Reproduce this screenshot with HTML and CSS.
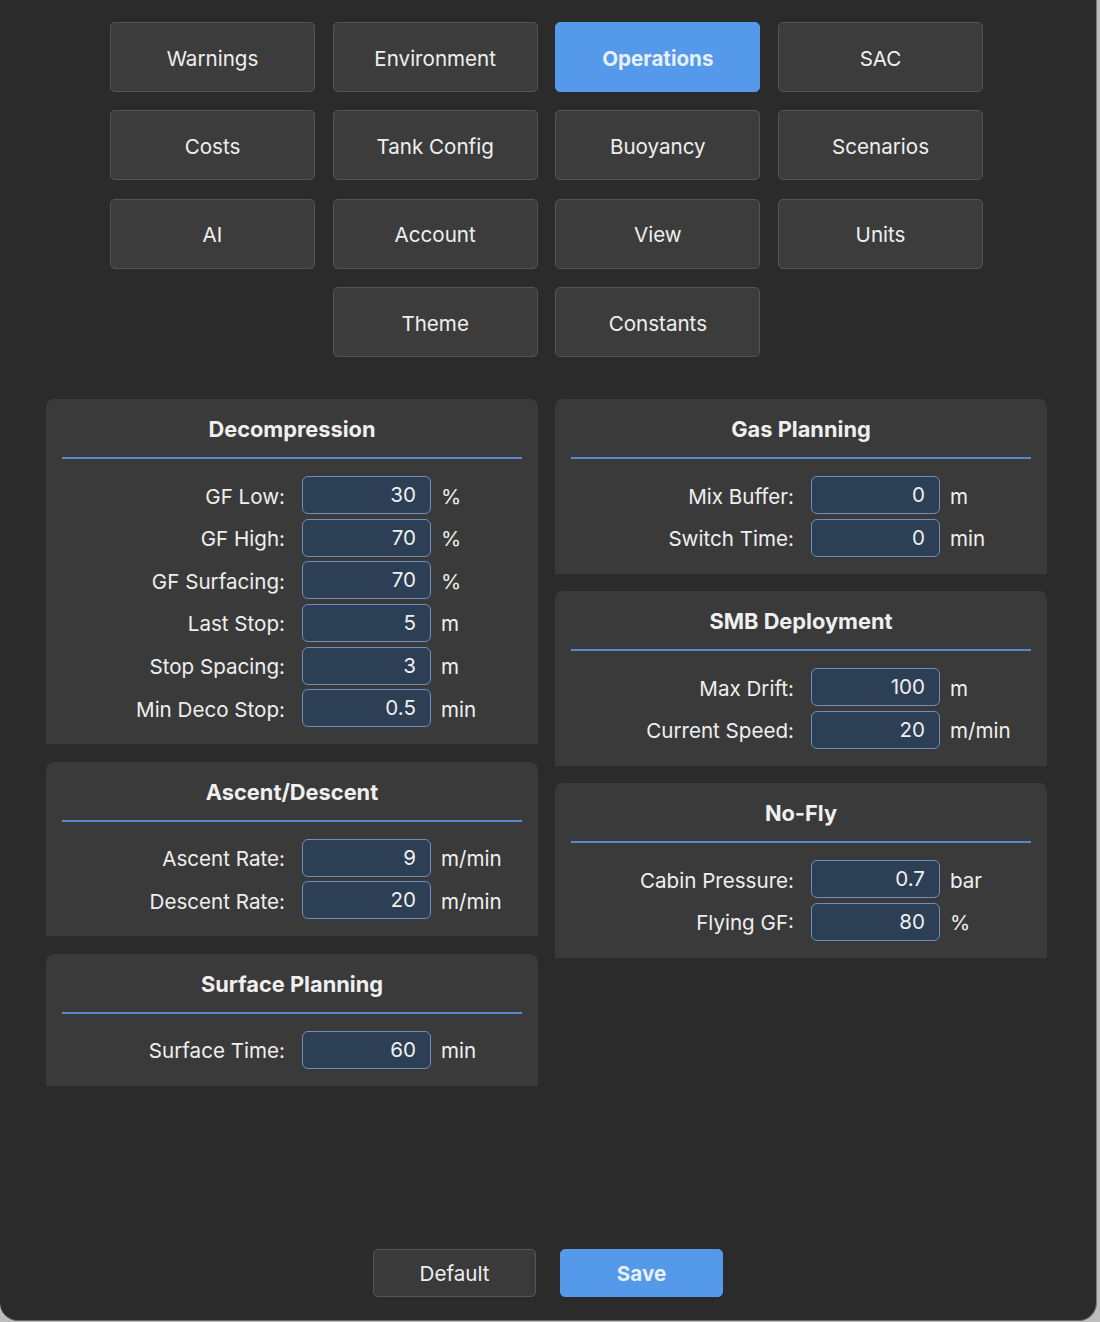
FILE: index.html
```html
<!DOCTYPE html>
<html>
<head lang="en">
    <meta charset="UTF-8">
    <title>Settings</title>
    <link rel="stylesheet" href="styles.css">
</head>
<body>
    <div class="window">
        <div class="tabs">
            <div class="tab">Warnings</div>
            <div class="tab">Environment</div>
            <div class="tab current">Operations</div>
            <div class="tab">SAC</div>
            <div class="tab">Costs</div>
            <div class="tab">Tank Config</div>
            <div class="tab">Buoyancy</div>
            <div class="tab">Scenarios</div>
            <div class="tab">AI</div>
            <div class="tab">Account</div>
            <div class="tab">View</div>
            <div class="tab">Units</div>
            <div class="tab col2">Theme</div>
            <div class="tab">Constants</div>
        </div>

        <div class="panels">
            <div class="column">
                <div class="panel">
                    <div class="title">Decompression</div>
                    <div class="rows">
                        <label>GF Low:</label><div class="field">30</div><span>%</span>
                        <label>GF High:</label><div class="field">70</div><span>%</span>
                        <label>GF Surfacing:</label><div class="field">70</div><span>%</span>
                        <label>Last Stop:</label><div class="field">5</div><span>m</span>
                        <label>Stop Spacing:</label><div class="field">3</div><span>m</span>
                        <label>Min Deco Stop:</label><div class="field">0.5</div><span>min</span>
                    </div>
                </div>
                <div class="panel">
                    <div class="title">Ascent/Descent</div>
                    <div class="rows">
                        <label>Ascent Rate:</label><div class="field">9</div><span>m/min</span>
                        <label>Descent Rate:</label><div class="field">20</div><span>m/min</span>
                    </div>
                </div>
                <div class="panel">
                    <div class="title">Surface Planning</div>
                    <div class="rows">
                        <label>Surface Time:</label><div class="field">60</div><span>min</span>
                    </div>
                </div>
            </div>
            <div class="column">
                <div class="panel">
                    <div class="title">Gas Planning</div>
                    <div class="rows">
                        <label>Mix Buffer:</label><div class="field">0</div><span>m</span>
                        <label>Switch Time:</label><div class="field">0</div><span>min</span>
                    </div>
                </div>
                <div class="panel">
                    <div class="title">SMB Deployment</div>
                    <div class="rows">
                        <label>Max Drift:</label><div class="field">100</div><span>m</span>
                        <label>Current Speed:</label><div class="field">20</div><span>m/min</span>
                    </div>
                </div>
                <div class="panel">
                    <div class="title">No-Fly</div>
                    <div class="rows">
                        <label>Cabin Pressure:</label><div class="field">0.7</div><span>bar</span>
                        <label>Flying GF:</label><div class="field">80</div><span>%</span>
                    </div>
                </div>
            </div>
        </div>

        <div class="actions">
            <div class="btn">Default</div>
            <div class="btn primary">Save</div>
        </div>
    </div>
</body>
</html>
```

FILE: styles.css
```css
* {
    margin: 0;
    padding: 0;
    box-sizing: border-box;
}
body {
    background: #bdbdbd;
    font-family: Inter, "Noto Sans", sans-serif;
    font-size: 20.6px;
    color: #efefef;
}
.window {
    width: 1097px;
    height: 1321px;
    background: #2b2b2b;
    border-right: 1px solid #7a7a7a;
    border-bottom: 1px solid #6a6a6a;
    border-radius: 0 0 18px 18px;
    display: flex;
    flex-direction: column;
    padding-top: 22px;
    padding-bottom: 23px;
}
/* tabs */
.tabs {
    width: 873px;
    margin-left: 110px;
    display: grid;
    grid-template-columns: repeat(4, 1fr);
    grid-auto-rows: 70px;
    gap: 18.4px 17.7px;
}
.tab {
    background: #3c3c3c;
    border: 1.5px solid #555;
    border-radius: 5px;
    display: flex;
    align-items: center;
    justify-content: center;
    padding-top: 2px;
}
.tab.current {
    background: #5599ea;
    border-color: #5599ea;
    color: #e8f0fa;
    font-weight: 700;
}
.col2 {
    grid-column: 2;
}
/* panels */
.panels {
    width: 1001px;
    margin: 42px 0 0 46px;
    display: grid;
    grid-template-columns: 492px 492px;
    gap: 17px;
    align-items: start;
}
.column {
    display: flex;
    flex-direction: column;
    gap: 17.5px;
}
.panel {
    background: #3a3a3a;
    border-radius: 8px 8px 0 0;
    padding: 0 16px 17px;
}
.title {
    height: 60px;
    border-bottom: 2px solid #5a8acb;
    display: flex;
    align-items: center;
    justify-content: center;
    font-weight: 700;
    font-size: 21.8px;
    padding-top: 2px;
}
.rows {
    display: grid;
    grid-template-columns: 223px 129px auto;
    grid-auto-rows: 38px;
    column-gap: 17px;
    row-gap: 4.6px;
    padding-top: 17px;
    align-items: center;
}
.rows label,
.rows span {
    padding-top: 2px;
}
.rows label {
    text-align: right;
}
.rows span {
    margin-left: -7px;
}
.field {
    height: 38px;
    background: #2c3f54;
    border: 1.5px solid #6f8fbb;
    border-radius: 6px;
    text-align: right;
    padding-right: 14px;
    line-height: 36px;
}
/* bottom buttons */
.actions {
    margin-top: auto;
    display: flex;
    justify-content: center;
    gap: 24px;
}
.btn {
    width: 163px;
    height: 48px;
    background: #3a3a3a;
    border: 1.5px solid #575757;
    border-radius: 5px;
    display: flex;
    align-items: center;
    justify-content: center;
}
.btn.primary {
    background: #5599ea;
    border-color: #5599ea;
    color: #e8f0fa;
    font-weight: 700;
}
```
